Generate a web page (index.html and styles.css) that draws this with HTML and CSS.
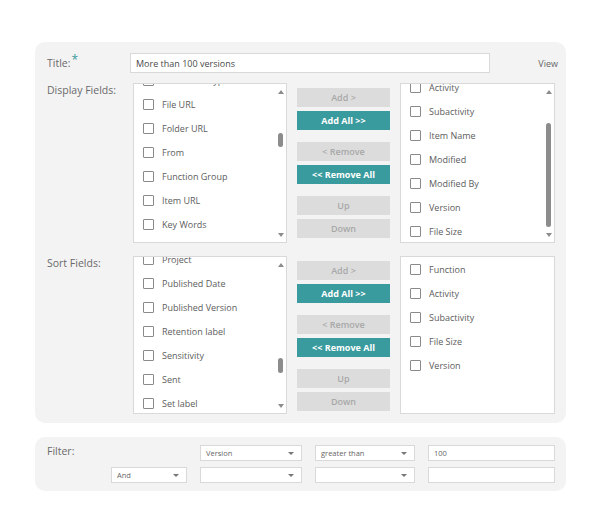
FILE: index.html
```html
<!DOCTYPE html>
<html lang="en">
<head>
    <meta charset="UTF-8">
    <meta name="viewport" content="width=device-width, initial-scale=1.0">
    <title>View settings</title>
    <link rel="stylesheet" href="styles.css">
</head>
<body>

    <div class="panel main-panel">
        <div class="title-row">
            <label class="field-label">Title:<span class="required">*</span></label>
            <input type="text" class="title-input" value="More than 100 versions">
            <span class="view-link">View</span>
        </div>

        <div class="picker-row">
            <div class="field-label">Display Fields:</div>

            <div class="list">
                <div class="items" style="margin-top:-16px">
                    <div class="item"><span class="box"></span>Document Type</div>
                    <div class="item"><span class="box"></span>File URL</div>
                    <div class="item"><span class="box"></span>Folder URL</div>
                    <div class="item"><span class="box"></span>From</div>
                    <div class="item"><span class="box"></span>Function Group</div>
                    <div class="item"><span class="box"></span>Item URL</div>
                    <div class="item"><span class="box"></span>Key Words</div>
                </div>
                <div class="scrollbar">
                    <span class="arrow up"></span>
                    <div class="track"><span class="thumb" style="margin-top:39px;height:14px"></span></div>
                    <span class="arrow down"></span>
                </div>
            </div>

            <div class="buttons">
                <div class="btn-group">
                    <button class="btn">Add &gt;</button>
                    <button class="btn btn-primary">Add All &gt;&gt;</button>
                </div>
                <div class="btn-group">
                    <button class="btn">&lt; Remove</button>
                    <button class="btn btn-primary">&lt;&lt; Remove All</button>
                </div>
                <div class="btn-group">
                    <button class="btn">Up</button>
                    <button class="btn">Down</button>
                </div>
            </div>

            <div class="list">
                <div class="items" style="margin-top:-9px">
                    <div class="item"><span class="box"></span>Activity</div>
                    <div class="item"><span class="box"></span>Subactivity</div>
                    <div class="item"><span class="box"></span>Item Name</div>
                    <div class="item"><span class="box"></span>Modified</div>
                    <div class="item"><span class="box"></span>Modified By</div>
                    <div class="item"><span class="box"></span>Version</div>
                    <div class="item"><span class="box"></span>File Size</div>
                </div>
                <div class="scrollbar">
                    <span class="arrow up"></span>
                    <div class="track"><span class="thumb" style="margin-top:29px;height:104px"></span></div>
                    <span class="arrow down"></span>
                </div>
            </div>
        </div>

        <div class="picker-row sort-row">
            <div class="field-label">Sort Fields:</div>

            <div class="list">
                <div class="items" style="margin-top:-10px">
                    <div class="item"><span class="box"></span>Project</div>
                    <div class="item"><span class="box"></span>Published Date</div>
                    <div class="item"><span class="box"></span>Published Version</div>
                    <div class="item"><span class="box"></span>Retention label</div>
                    <div class="item"><span class="box"></span>Sensitivity</div>
                    <div class="item"><span class="box"></span>Sent</div>
                    <div class="item"><span class="box"></span>Set label</div>
                </div>
                <div class="scrollbar">
                    <span class="arrow up"></span>
                    <div class="track"><span class="thumb" style="margin-top:91px;height:15px"></span></div>
                    <span class="arrow down"></span>
                </div>
            </div>

            <div class="buttons">
                <div class="btn-group">
                    <button class="btn">Add &gt;</button>
                    <button class="btn btn-primary">Add All &gt;&gt;</button>
                </div>
                <div class="btn-group">
                    <button class="btn">&lt; Remove</button>
                    <button class="btn btn-primary">&lt;&lt; Remove All</button>
                </div>
                <div class="btn-group">
                    <button class="btn">Up</button>
                    <button class="btn">Down</button>
                </div>
            </div>

            <div class="list">
                <div class="items" style="margin-top:0">
                    <div class="item"><span class="box"></span>Function</div>
                    <div class="item"><span class="box"></span>Activity</div>
                    <div class="item"><span class="box"></span>Subactivity</div>
                    <div class="item"><span class="box"></span>File Size</div>
                    <div class="item"><span class="box"></span>Version</div>
                </div>
            </div>
        </div>
    </div>

    <div class="panel filter-panel">
        <div class="field-label filter-label">Filter:</div>
        <div class="select col-field">Version<span class="caret"></span></div>
        <div class="select col-op">greater than<span class="caret"></span></div>
        <div class="text-box col-value">100</div>

        <div class="select col-join">And<span class="caret"></span></div>
        <div class="select col-field"><span class="caret"></span></div>
        <div class="select col-op"><span class="caret"></span></div>
        <div class="text-box col-value"></div>
    </div>

</body>
</html>
```

FILE: styles.css
```css
:root {
    --panel-color: #f3f3f3;
    --border-color: #d9d9d9;
    --text-color: #5c5c5c;
    --label-color: #6a6a6a;
    --teal: #3a9b9e;
    --button-grey: #dcdcdc;
    --scroll-grey: #8c8c8c;
}

body {
    margin: 0;
    background-color: #fff;
    font-family: 'Open Sans', 'Noto Sans', sans-serif;
    color: var(--text-color);
}

.panel {
    background-color: var(--panel-color);
    border-radius: 10px;
    margin-left: 35px;
    width: 531px;
    box-sizing: border-box;
}

.main-panel {
    margin-top: 42px;
    height: 381px;
    padding: 11px 0 0 12px;
}

.field-label {
    font-size: 10.5px;
    color: var(--label-color);
    line-height: 14px;
}

.required {
    color: var(--teal);
    font-size: 12px;
    vertical-align: 3px;
    margin-left: 1px;
}

.title-row {
    display: grid;
    grid-template-columns: 83px 360px 1fr;
    align-items: center;
    height: 20px;
}

.title-row .field-label {
    align-self: start;
}

.title-input {
    height: 20px;
    box-sizing: border-box;
    border: 1px solid var(--border-color);
    background-color: #fff;
    font-family: inherit;
    font-size: 9px;
    color: #4a4a4a;
    padding: 0 5px;
    margin: 0;
    outline: none;
}

.view-link {
    font-size: 9px;
    color: #666;
    text-align: right;
    padding-right: 8px;
}

.picker-row {
    display: grid;
    grid-template-columns: 76px 154px 93px 155px;
    column-gap: 10px;
    margin-top: 10px;
    height: 160px;
}

.sort-row {
    margin-top: 13px;
    height: 158px;
}

.list {
    display: flex;
    background-color: #fff;
    border: 1px solid var(--border-color);
    box-sizing: border-box;
    overflow: hidden;
}

.items {
    flex: 1;
    padding-left: 9px;
}

.item {
    height: 24px;
    display: flex;
    align-items: center;
    font-size: 9px;
    color: var(--text-color);
    white-space: nowrap;
}

.box {
    width: 9px;
    height: 9px;
    border: 1px solid #8a8a8a;
    border-radius: 1px;
    margin-right: 8px;
    flex-shrink: 0;
}

.scrollbar {
    width: 11px;
    display: flex;
    flex-direction: column;
    align-items: center;
    padding: 6px 0 5px;
    box-sizing: border-box;
}

.arrow {
    width: 0;
    height: 0;
    border-left: 3px solid transparent;
    border-right: 3px solid transparent;
}

.arrow.up {
    border-bottom: 4px solid var(--scroll-grey);
}

.arrow.down {
    border-top: 4px solid var(--scroll-grey);
}

.track {
    flex: 1;
}

.thumb {
    display: block;
    width: 5px;
    border-radius: 3px;
    background-color: var(--scroll-grey);
}

.buttons {
    display: flex;
    flex-direction: column;
    gap: 12px;
    padding-top: 5px;
}

.btn-group {
    display: flex;
    flex-direction: column;
    gap: 4px;
}

.btn {
    height: 19px;
    border: none;
    margin: 0;
    padding: 0;
    background-color: var(--button-grey);
    color: #a8a8a8;
    font-family: inherit;
    font-size: 9px;
    font-weight: 600;
}

.btn-primary {
    background-color: var(--teal);
    color: #fff;
    font-weight: 700;
}

.filter-panel {
    margin-top: 14px;
    height: 54px;
    padding: 8px 0 0 12px;
    display: grid;
    grid-template-columns: 51px 76px 102px 100px 127px;
    grid-template-rows: 16px 16px;
    column-gap: 13px;
    row-gap: 6px;
}

.filter-label {
    grid-column: 1 / 3;
    grid-row: 1;
    line-height: 12px;
}

.col-join { grid-column: 2; grid-row: 2; }
.col-field { grid-column: 3; }
.col-op { grid-column: 4; }
.col-value { grid-column: 5; }

.select,
.text-box {
    background-color: #fff;
    border: 1px solid var(--border-color);
    box-sizing: border-box;
    font-size: 7.5px;
    color: #666;
    display: flex;
    align-items: center;
    padding: 0 5px;
}

.select {
    justify-content: space-between;
}

.caret {
    margin-left: auto;
    width: 0;
    height: 0;
    border-left: 3px solid transparent;
    border-right: 3px solid transparent;
    border-top: 3px solid #777;
    margin-right: 2px;
}
```
